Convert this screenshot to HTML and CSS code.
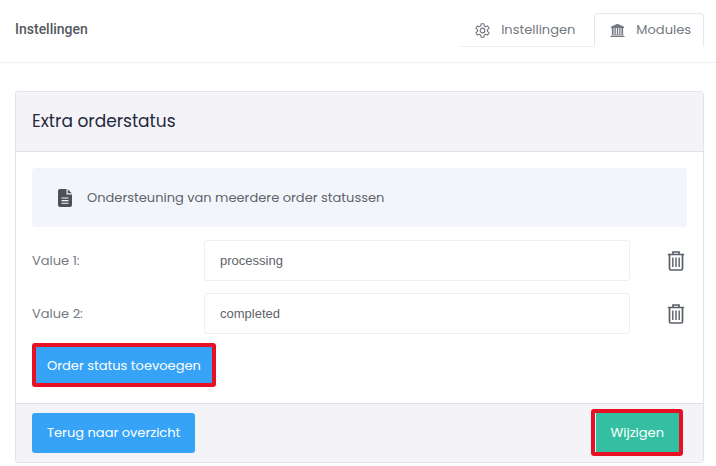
FILE: index.html
```html
<!DOCTYPE html>
<html lang="nl">
<head>
<meta charset="utf-8">
<meta name="viewport" content="width=device-width, initial-scale=1">
<title>Instellingen</title>
<link rel="stylesheet" href="styles.css">
</head>
<body>
<header class="topbar">
  <h1 class="page-title">Instellingen</h1>
  <nav class="tabs">
    <a class="tab" href="#instellingen">
      <svg class="tab-icon" viewBox="0 0 16 16" fill="none" stroke="currentColor" stroke-width="1.2" stroke-linejoin="round" aria-hidden="true">
        <path d="M6.500.8h3l.4 2.200 1.500.9 2.100-.8 1.500 2.600-1.700 1.400v1.800l1.700 1.400-1.500 2.600-2.100-.8-1.500.9-.4 2.200h-3l-.4-2.200-1.500-.9-2.100.8L1 10.300l1.700-1.400V7.100L1 5.700l1.500-2.600 2.100.8 1.500-.9z"/>
        <circle cx="8" cy="8" r="2.500"/>
      </svg>
      Instellingen
    </a>
    <a class="tab tab-active" href="#modules" aria-current="page">
      <svg class="tab-icon" viewBox="0 0 16 16" fill="currentColor" aria-hidden="true">
        <path d="M8 .8l7 3.200v1.200H1V4zM2 5.200h1.800V12H2zM4.800 5.200h1.400V12H4.800zM7.300 5.200h1.400V12H7.300zM9.800 5.200h1.400V12H9.800zM12.200 5.200H14V12h-1.800zM1.500 12.200h13v1.200h-13zM.5 13.800h15v1.200H.5z"/>
      </svg>
      Modules
    </a>
  </nav>
</header>
<main class="content">
  <form class="card">
    <h2 class="card-header">Extra orderstatus</h2>
    <div class="card-body">
      <div class="notice">
        <svg class="notice-icon" viewBox="0 0 14 18" aria-hidden="true">
          <path fill="currentColor" d="M2 0h6.500v5.500H14V16a2 2 0 0 1-2 2H2a2 2 0 0 1-2-2V2a2 2 0 0 1 2-2zM9.700.2L13.800 4.300H9.700z"/>
          <path stroke="#f2f6fa" stroke-width="1.100" d="M3.500 9h7M3.500 11.600h7M3.500 14.200h7"/>
        </svg>
        Ondersteuning van meerdere order statussen
      </div>
      <div class="field">
        <label for="value1">Value 1:</label>
        <input id="value1" type="text" value="processing">
        <button class="delete" type="button" aria-label="Verwijder value 1">
          <svg viewBox="0 0 18 20" fill="none" stroke="currentColor" aria-hidden="true">
            <path stroke-width="1.700" d="M.8 3.500h16.400M6 3V1h6v2M2.500 4v13.500q0 1.500 1.500 1.500h10q1.500 0 1.500-1.500V4"/>
            <path stroke-width="1.400" d="M5.800 6.500v9.500M9 6.500v9.500M12.200 6.500v9.500"/>
          </svg>
        </button>
      </div>
      <div class="field">
        <label for="value2">Value 2:</label>
        <input id="value2" type="text" value="completed">
        <button class="delete" type="button" aria-label="Verwijder value 2">
          <svg viewBox="0 0 18 20" fill="none" stroke="currentColor" aria-hidden="true">
            <path stroke-width="1.700" d="M.8 3.500h16.400M6 3V1h6v2M2.500 4v13.500q0 1.500 1.500 1.500h10q1.500 0 1.500-1.500V4"/>
            <path stroke-width="1.400" d="M5.800 6.500v9.500M9 6.500v9.500M12.200 6.500v9.500"/>
          </svg>
        </button>
      </div>
      <button class="btn btn-primary btn-framed" type="button">Order status toevoegen</button>
    </div>
    <div class="card-footer">
      <a class="btn btn-primary" href="#overzicht">Terug naar overzicht</a>
      <button class="btn btn-success btn-framed" type="submit">Wijzigen</button>
    </div>
  </form>
</main>
</body>
</html>
```
FILE: styles.css
```css
* {
  box-sizing: border-box;
}

body {
  margin: 0;
  background: #fff;
  color: #5f636b;
  font: 13px/20px Poppins, Inter, sans-serif;
}

.topbar {
  display: flex;
  justify-content: space-between;
  align-items: flex-start;
  padding: 13px 12px 15px 15px;
  border-bottom: 1px solid #f0f1f3;
}

.page-title {
  margin: 0;
  padding-top: 6px;
  color: #55585e;
  font: 500 14px/20px Roboto, sans-serif;
}

.tabs {
  display: flex;
}

.tab {
  display: flex;
  align-items: center;
  gap: 11px;
  height: 34px;
  padding: 0 18px 0 14px;
  border: 1px solid transparent;
  border-bottom-color: #e9edf1;
  color: #737780;
  text-decoration: none;
}

.tab-active {
  padding: 0 12px 0 15px;
  border-color: #e4e8ec;
  border-bottom-color: transparent;
  border-radius: 4px 4px 0 0;
}

.tab-icon {
  width: 15px;
  height: 15px;
}

.content {
  padding: 28px 12px 2px 15px;
}

.card {
  border: 1px solid #e2e3e7;
  border-radius: 3px;
}

.card-header {
  margin: 0;
  padding: 17px 16px 18px;
  background: #f3f3f8;
  border-bottom: 1px solid #dfe0e4;
  color: #25293f;
  font-size: 17px;
  font-weight: 400;
  line-height: 24px;
}

.card-body {
  padding: 16px;
}

.notice {
  display: flex;
  align-items: center;
  gap: 15px;
  min-height: 59px;
  padding: 0 26px;
  margin-bottom: 13px;
  border-radius: 4px;
  background: #f2f6fa;
}

.notice-icon {
  width: 14px;
  height: 18px;
  color: #4d515a;
}

.field {
  display: grid;
  grid-template-columns: 172px 1fr 57px;
  align-items: center;
  margin-bottom: 12px;
}

.field label {
  color: #777a80;
}

.field input {
  width: 100%;
  height: 41px;
  padding: 0 15px;
  border: 1px solid #eceef2;
  border-radius: 3px;
  background: #fff;
  color: #5f636b;
  font: 13px/20px "Liberation Sans", Arial, sans-serif;
}

.delete {
  justify-self: end;
  display: flex;
  margin-right: 2px;
  padding: 0;
  border: 0;
  background: none;
  color: #5a5f69;
  cursor: pointer;
}

.delete svg {
  width: 18px;
  height: 20px;
}

.field + .btn {
  margin-top: -3px;
}

.btn {
  display: block;
  padding: 10px 15px;
  border: 0;
  border-radius: 3px;
  color: #fff;
  font: inherit;
  text-decoration: none;
  cursor: pointer;
}

.btn-primary {
  background: #36a3f7;
}

.btn-success {
  background: #34bfa3;
  box-shadow: inset 1px 0 #e4f5f3;
}

.btn-framed {
  padding: 9px 11px 7px;
  border: 4px solid #e81123;
}

.card-footer {
  display: flex;
  justify-content: space-between;
  align-items: center;
  padding: 5px 20px 6px 16px;
  border-top: 1px solid #dfe0e4;
  background: #f3f3f8;
}

.card-footer .btn-framed {
  padding: 10px 15px 9px 16px;
}
```
